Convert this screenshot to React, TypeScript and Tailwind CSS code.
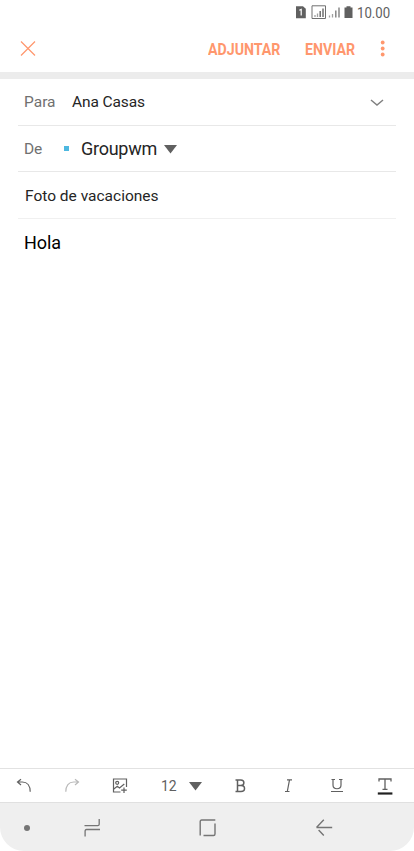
import React from "react";

const UndoIcon = () => (
  <svg width="16" height="16" viewBox="0 0 16 16" fill="none" stroke="#606060" strokeWidth="1.2">
    <path d="M5 1.200 1.500 4l3.500 3M1.500 4h4.800c5 0 7.900 3.800 7.900 9.800" />
  </svg>
);

const RedoIcon = () => (
  <svg width="16" height="16" viewBox="0 0 16 16" fill="none" stroke="#b9b9b9" strokeWidth="1.2">
    <path d="M11 1.200 14.500 4 11 7M14.500 4H9.700C4.700 4 1.800 7.800 1.800 13.800" />
  </svg>
);

const ImageAddIcon = () => (
  <svg width="16" height="16" viewBox="0 0 16 16" fill="none" stroke="#606060" strokeWidth="1.2">
    <path d="M8.500 14h-7V1h13v8" />
    <circle cx="5.200" cy="4.800" r="1.500" />
    <path d="m1.500 11.300 3.800-3 2.200 1.700 4.800-4M12 9.500v5.500M9.200 12.200h5.600" />
  </svg>
);

const StatusBar = () => (
  <div className="flex h-[25px] items-center pl-[295px]">
    <svg width="60" height="15" viewBox="0 0 60 15" fill="none" className="shrink-0">
      <path d="M1 1.200h7l2.800 2.600v9.400H1z" fill="#606060" />
      <path d="M4.300 5.300 6.200 4.500v6" stroke="#fff" strokeWidth="1.200" />
      <path d="M17 .8h13.500v12.700H17z" stroke="#707070" />
      <path d="M20 12v-2M22.500 12V8.500" stroke="#a0a0a0" strokeWidth="1.300" />
      <path d="M25.200 12V6M28 12V3.500" stroke="#707070" strokeWidth="1.500" />
      <path d="M34.500 12.500v-2M37.500 12.500V9" stroke="#a0a0a0" strokeWidth="1.300" />
      <path d="M40.800 12.500V5.500M44 12.500V2.500" stroke="#808080" strokeWidth="1.400" />
      <path d="M49.500 2.500h2V1.200h4v1.300h2V13h-8z" fill="#606060" />
    </svg>
    <span className="ml-[2px] w-9 origin-left scale-x-[0.88] pt-px text-[15px] leading-none text-[#606060]">10.00</span>
  </div>
);

const Header = () => (
  <header className="flex h-[47px] items-center pl-5 text-base font-bold text-[#ff976d]">
    <svg width="16" height="16" viewBox="0 0 16 16" fill="none" stroke="currentColor" strokeWidth="1.200">
      <path d="m1 .5 14 14M15 .5 1 14.500" />
    </svg>
    <button className="ml-[172px] w-[97px] pt-[2px] text-left">
      <span className="block w-max origin-left scale-x-[0.885]">ADJUNTAR</span>
    </button>
    <button className="w-[74px] pt-[2px] text-left">
      <span className="block w-max origin-left scale-x-[0.885]">ENVIAR</span>
    </button>
    <svg width="8" height="18" viewBox="0 0 8 18" fill="currentColor">
      <circle cx="3.700" cy="2.500" r="1.900" />
      <circle cx="3.700" cy="8.500" r="1.900" />
      <circle cx="3.700" cy="14.500" r="1.900" />
    </svg>
  </header>
);

const Toolbar = () => (
  <div className="flex h-[34px] items-center border-t border-[#e2e2e2] pl-4 text-[#606060]">
    <UndoIcon />
    <span className="ml-8"><RedoIcon /></span>
    <span className="ml-8"><ImageAddIcon /></span>
    <span className="ml-[33px] w-[28px] pt-px text-sm">12</span>
    <svg width="13" height="9" viewBox="0 0 13 9" fill="currentColor" className="mt-px">
      <path d="M0 0h13L6.500 8.500z" />
    </svg>
    <svg width="12" height="14" viewBox="0 0 12 14" fill="none" stroke="currentColor" strokeWidth="1.500" className="ml-[33px]">
      <path d="M.5 1h5.300c4.100 0 4.100 5.500 0 5.500H2.500M2.500 1v11.500M.5 12.500H6c4.700 0 4.700-6 0-6" />
    </svg>
    <svg width="8" height="14" viewBox="0 0 8 14" fill="none" stroke="currentColor" strokeWidth="1.200" className="ml-[38px]">
      <path d="M2 .8h5M0 12.500h4.500M4.500.8 2.300 12.500" />
    </svg>
    <svg width="14" height="15" viewBox="0 0 14 15" fill="none" stroke="currentColor" className="ml-[37px]">
      <path d="M1.500 1.500h3.500M9 1.500h3.500M3 1.500V7c0 5 8 5 8 0V1.500M1 13.500h12" strokeWidth="1.200" />
    </svg>
    <svg width="16" height="18" viewBox="0 0 16 18" fill="none" stroke="currentColor" className="mt-px ml-[33px]">
      <path d="M2 4.500V2h12v2.500M8 2v10M5.500 12.300h5" strokeWidth="1.300" />
      <path d="M.8 16.500h14.600" stroke="#202020" strokeWidth="2.200" />
    </svg>
  </div>
);

const NavBar = () => (
  <nav className="flex h-[49px] items-center rounded-b-[24px] border-t border-[#e0e0e0] bg-[#efefef] pt-0.5 pl-6 text-[#757575]">
    <span className="h-1.5 w-1.5 rounded-full bg-[#757575]" />
    <svg width="18" height="20" viewBox="0 0 18 20" fill="none" stroke="currentColor" strokeWidth="1.300" className="ml-[53px]">
      <path d="M1.500 7.700h13.300q1.400 0 1.400-1.400V1M17 11.500H3.500q-1.400 0-1.400 1.400v5.500" />
    </svg>
    <svg width="18" height="18" viewBox="0 0 18 18" fill="none" stroke="currentColor" strokeWidth="1.400" className="ml-[98px]">
      <path d="M1.200 16.500V2.500Q1.200 1 2.700 1h13.600M16 4.500V15q0 1.500-1.500 1.500h-10" />
    </svg>
    <svg width="18" height="18" viewBox="0 0 18 18" fill="none" stroke="currentColor" strokeWidth="1.400" className="ml-[98px]">
      <path d="M8.800.8 1.500 8.500M1.500 8.500h15.700M3.600 11l5.200 5.500" />
    </svg>
  </nav>
);

const App = () => {
  return (
    <div className="flex h-[851px] w-[414px] flex-col bg-white font-[Roboto,sans-serif] text-[#252525]">
      <StatusBar />
      <Header />
      <div className="h-[7px] shrink-0 bg-[#ececec]" />

      <main className="flex-1 px-[18px]">
        <div className="flex h-[47px] items-center border-b border-[#e8e8e8] pt-px pl-1.5">
          <span className="w-12 text-[15.5px] text-[#707070]">Para</span>
          <span className="text-[15.5px] tracking-[-0.1px]">Ana Casas</span>
          <svg width="14" height="8" viewBox="0 0 14 8" fill="none" stroke="#808080" strokeWidth="1.500" className="mr-3 ml-auto">
            <path d="m1 1 6 5 6-5" />
          </svg>
        </div>
        <div className="flex h-[46px] items-center border-b border-[#e8e8e8] pl-1.5">
          <span className="w-10 pt-[3px] text-[15.5px] tracking-[-0.2px] text-[#707070]">De</span>
          <span className="h-[5px] w-[5px] bg-[#4db8e0]" />
          <span className="ml-3 w-[83px] text-lg tracking-[-0.25px]">Groupwm</span>
          <svg width="13" height="9" viewBox="0 0 13 9" fill="#606060" className="mt-px">
            <path d="M0 0h13L6.500 8.500z" />
          </svg>
        </div>
        <div className="flex h-[47px] items-center border-b border-[#f0f0f0] pt-[3px] pl-[7px] text-[15.5px]">Foto de vacaciones</div>
        <div className="pt-[10px] pl-1.5 text-lg tracking-[-0.1px] text-black">Hola</div>
      </main>

      <Toolbar />
      <NavBar />
    </div>
  );
};

export default App;
